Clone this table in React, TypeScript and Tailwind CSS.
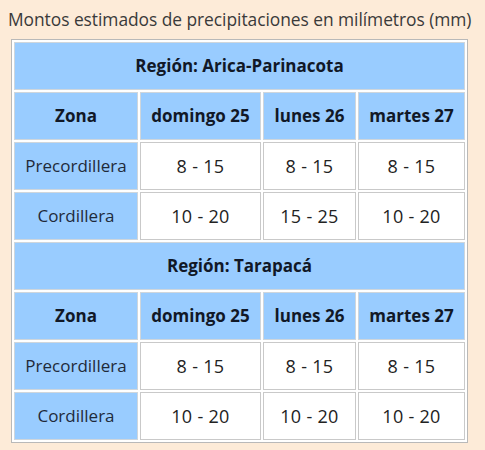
import React from "react";

type Region = { name: string; rows: { zona: string; vals: string[] }[] };

const regions: Region[] = [
  {
    name: "Región: Arica-Parinacota",
    rows: [
      { zona: "Precordillera", vals: ["8 - 15", "8 - 15", "8 - 15"] },
      { zona: "Cordillera", vals: ["10 - 20", "15 - 25", "10 - 20"] },
    ],
  },
  {
    name: "Región: Tarapacá",
    rows: [
      { zona: "Precordillera", vals: ["8 - 15", "8 - 15", "8 - 15"] },
      { zona: "Cordillera", vals: ["10 - 20", "10 - 20", "10 - 20"] },
    ],
  },
];

const days = ["domingo 25", "lunes 26", "martes 27"];

export default function App() {
  return (
    <div
      className="w-[485px] h-[450px] bg-[#fdebd8] overflow-hidden pt-[6px] pl-[8px]"
      style={{ fontFamily: '"Open Sans", "Noto Sans", sans-serif' }}
    >
      <div className="text-[17.4px] leading-[26px] text-[#3a3a3a] tracking-[-0.05px]">
        Montos estimados de precipitaciones en milímetros (mm)
      </div>
      <table className="mt-[7px] ml-[3px] w-[455px] border border-[#b9b9b9] border-separate border-spacing-[2px] bg-white table-fixed">
        <colgroup>
          <col className="w-[124px]" />
          <col className="w-[121px]" />
          <col className="w-[93px]" />
          <col className="w-[107px]" />
        </colgroup>
        <tbody>
          {regions.map((r) => (
            <React.Fragment key={r.name}>
              <tr>
                <td
                  colSpan={4}
                  className="h-[48px] p-0 bg-[#99ccff] border border-[#cfd6dc] text-center font-bold text-[17px] text-[#111827]"
                >
                  {r.name}
                </td>
              </tr>
              <tr>
                <td className="h-[48px] p-0 bg-[#99ccff] border border-[#cfd6dc] text-center font-bold text-[17px] text-[#111827]">
                  Zona
                </td>
                {days.map((d) => (
                  <td
                    key={d}
                    className="h-[48px] p-0 bg-[#99ccff] border border-[#cfd6dc] text-center font-bold text-[17px] text-[#111827] whitespace-nowrap"
                  >
                    {d}
                  </td>
                ))}
              </tr>
              {r.rows.map((row) => (
                <tr key={row.zona}>
                  <td className="h-[48px] p-0 bg-[#99ccff] border border-[#cfd6dc] text-center text-[17px] text-[#1f2a3a]">
                    {row.zona}
                  </td>
                  {row.vals.map((v, i) => (
                    <td
                      key={i}
                      className="h-[48px] p-0 bg-white border border-[#c9c9c9] text-center text-[18px] text-[#222] tracking-[0.3px]"
                    >
                      {v}
                    </td>
                  ))}
                </tr>
              ))}
            </React.Fragment>
          ))}
        </tbody>
      </table>
    </div>
  );
}
